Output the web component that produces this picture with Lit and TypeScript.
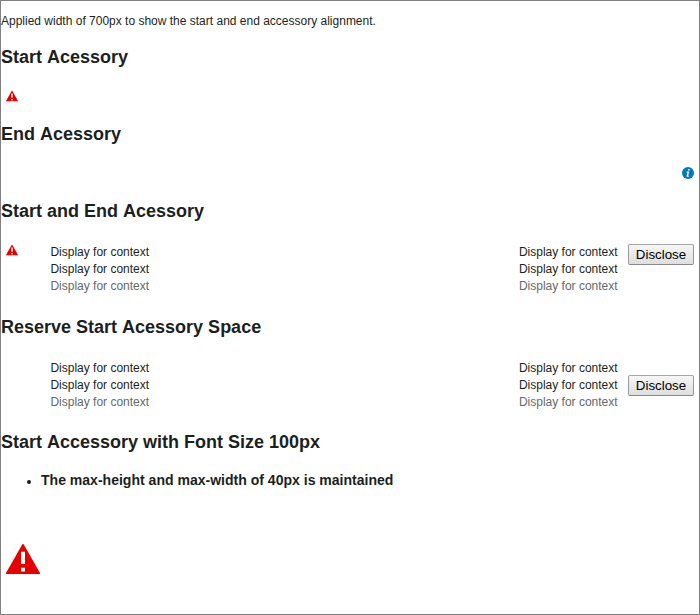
import { LitElement, html, css, nothing } from "lit";
import { customElement, property } from "lit/decorators.js";

@customElement("icon-alert")
class IconAlert extends LitElement {
  static styles = css`
    :host { display: block; }
    svg { display: block; width: 100%; height: 100%; }
  `;
  render() {
    return html`<svg viewBox="0 0 48 48">
      <path fill="#e50000" d="M24.9 3.1Q24 2.2 23.1 3.1L0 43.8V45.2H48V43.8Z"/>
      <path fill="#fff" d="M21.2 13.6H26.8V31.2H21.2ZM21.2 36.4H26.8V41.8H21.2Z"/>
    </svg>`;
  }
}

@customElement("icon-information")
class IconInformation extends LitElement {
  static styles = css`
    :host { display: block; }
    svg { display: block; width: 100%; height: 100%; }
  `;
  render() {
    return html`<svg viewBox="0 0 48 48">
      <circle cx="24" cy="24" r="24" fill="#0079be"/>
      <path fill="#fff" d="M25.2 8H31.2L30 14H24ZM18.6 18H28.8L24.6 35.4H28L27 39H18L22 21.6H17.8Z"/>
    </svg>`;
  }
}

@customElement("item-view")
class ItemView extends LitElement {
  @property({ type: Boolean }) alert = false;
  @property({ type: Boolean }) center = false;

  static styles = css`
    :host { display: block; }
    .row { display: flex; height: 56px; padding: 0 5px; }
    .start { width: 44.4px; flex: none; }
    .icon { width: 12px; height: 12px; }
    .body { flex: 1; display: flex; justify-content: space-between; font-size: 12px; line-height: 17px; }
    .muted { color: #64696c; }
    .end { flex: none; margin-left: 10.4px; height: 51px; display: flex; align-items: flex-start; }
    .end.center { align-items: center; }
    button {
      box-sizing: border-box; width: 66px; height: 21px; margin: 0; padding: 0;
      border: 1px solid #999; border-radius: 2px; border-top-color: #a6a6a6; border-bottom-color: #888;
      background: linear-gradient(#f6f6f6, #dedede);
      color: #000; font: 13.333px/17px "Liberation Sans", Arial, sans-serif;
    }
  `;
  render() {
    const column = html`<div>
      <div>Display for context</div>
      <div>Display for context</div>
      <div class="muted">Display for context</div>
    </div>`;
    return html`<div class="row">
      <div class="start">${this.alert ? html`<icon-alert class="icon"></icon-alert>` : nothing}</div>
      <div class="body">${column}${column}</div>
      <div class="end ${this.center ? "center" : ""}"><button>Disclose</button></div>
    </div>`;
  }
}

@customElement("app-root")
class AppRoot extends LitElement {
  static styles = css`
    :host {
      display: block; box-sizing: border-box; width: 700px; height: 615px;
      border: 1px solid #808080; background: #fff; color: #1c1f21;
      font: 12px/14px "Liberation Sans", Arial, sans-serif; overflow: hidden;
    }
    p { margin: 13px 0 19px; }
    section { height: 77px; }
    .views { height: 116px; }
    .reserve { height: 115px; }
    h2 { margin: 0 0 23px; font-size: 18px; line-height: 20px; font-kerning: none; }
    .small { width: 12px; height: 12px; }
    .only { display: flex; padding: 0 5px; }
    .end { justify-content: flex-end; }
    ul { margin: -4px 0 0; padding-left: 40px; }
    h3 { margin: 0; font-size: 14.04px; line-height: 18px; }
    .large { width: 34px; height: 34px; margin: 53px 0 0 5px; }
  `;
  render() {
    return html`
      <p>Applied width of 700px to show the start and end accessory alignment.</p>
      <section><h2>Start Acessory</h2><div class="only"><icon-alert class="small"></icon-alert></div></section>
      <section><h2>End Acessory</h2><div class="only end"><icon-information class="small"></icon-information></div></section>
      <section class="views"><h2>Start and End Acessory</h2><item-view alert></item-view></section>
      <section class="reserve"><h2>Reserve Start Acessory Space</h2><item-view center></item-view></section>
      <section class="font"><h2>Start Accessory with Font Size 100px</h2>
        <ul><li><h3>The max-height and max-width of 40px is maintained</h3></li></ul>
        <icon-alert class="large"></icon-alert>
      </section>`;
  }
}
